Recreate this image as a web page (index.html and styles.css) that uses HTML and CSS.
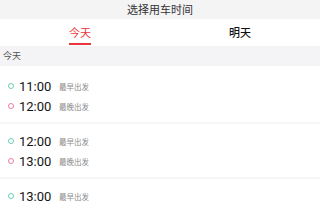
FILE: index.html
```html
<!DOCTYPE html>
<html lang="zh">
<head>
<meta charset="utf-8">
<link rel="stylesheet" href="styles.css">
</head>
<body>
<div class="page">
  <div class="header">选择用车时间</div>
  <div class="tabs">
    <div class="tab active"><span class="tab-label">今天</span></div>
    <div class="tab"><span class="tab-label">明天</span></div>
  </div>
  <div class="section">今天</div>
  <div class="list">
    <div class="group">
      <div class="row"><span class="dot early"></span><span class="time">11:00</span><span class="label">最早出发</span></div>
      <div class="row"><span class="dot late"></span><span class="time">12:00</span><span class="label">最晚出发</span></div>
    </div>
    <div class="group">
      <div class="row"><span class="dot early"></span><span class="time">12:00</span><span class="label">最早出发</span></div>
      <div class="row"><span class="dot late"></span><span class="time">13:00</span><span class="label">最晚出发</span></div>
    </div>
    <div class="group">
      <div class="row"><span class="dot early"></span><span class="time">13:00</span><span class="label">最早出发</span></div>
    </div>
  </div>
</div>
</body>
</html>
```
FILE: styles.css
```css
html, body {
  margin: 0;
  padding: 0;
  background: #ffffff;
}
body {
  font-family: "Noto Sans CJK SC", "Noto Sans", sans-serif;
  width: 320px;
  height: 206px;
  overflow: hidden;
}
.page {
  display: flex;
  flex-direction: column;
}
.header {
  height: 19px;
  line-height: 19px;
  background: #f4f4f5;
  text-align: center;
  font-size: 11px;
  color: #333333;
}
.tabs {
  display: flex;
  height: 27px;
  background: #ffffff;
}
.tab {
  flex: 1;
  display: flex;
  justify-content: center;
  align-items: stretch;
}
.tab-label {
  display: flex;
  align-items: center;
  font-size: 11px;
  color: #111111;
  font-weight: 500;
  border-bottom: 2px solid transparent;
  padding-top: 1px;
  box-sizing: border-box;
  height: 26px;
}
.tab.active .tab-label {
  color: #e8383d;
  font-weight: 400;
  border-bottom-color: #e8383d;
}
.section {
  height: 20px;
  line-height: 20px;
  background: #f4f4f6;
  font-size: 9px;
  color: #555555;
  padding-left: 3px;
}
.list {
  padding-top: 3px;
}
.group {
  padding: 7px 0 6px;
  border-bottom: 2px solid #f6f6f7;
}
.row {
  display: flex;
  align-items: center;
  height: 20px;
  padding-left: 8px;
}
.dot {
  width: 4px;
  height: 4px;
  border-radius: 50%;
  border: 1px solid #6fcdb8;
  margin-right: 5px;
  flex: none;
}
.dot.late {
  border-color: #ef7c9c;
}
.time {
  font-family: Roboto, "Liberation Sans", sans-serif;
  font-size: 13px;
  color: #141414;
  width: 40px;
  flex: none;
}
.label {
  font-size: 7.5px;
  color: #8a8a8a;
}
```
